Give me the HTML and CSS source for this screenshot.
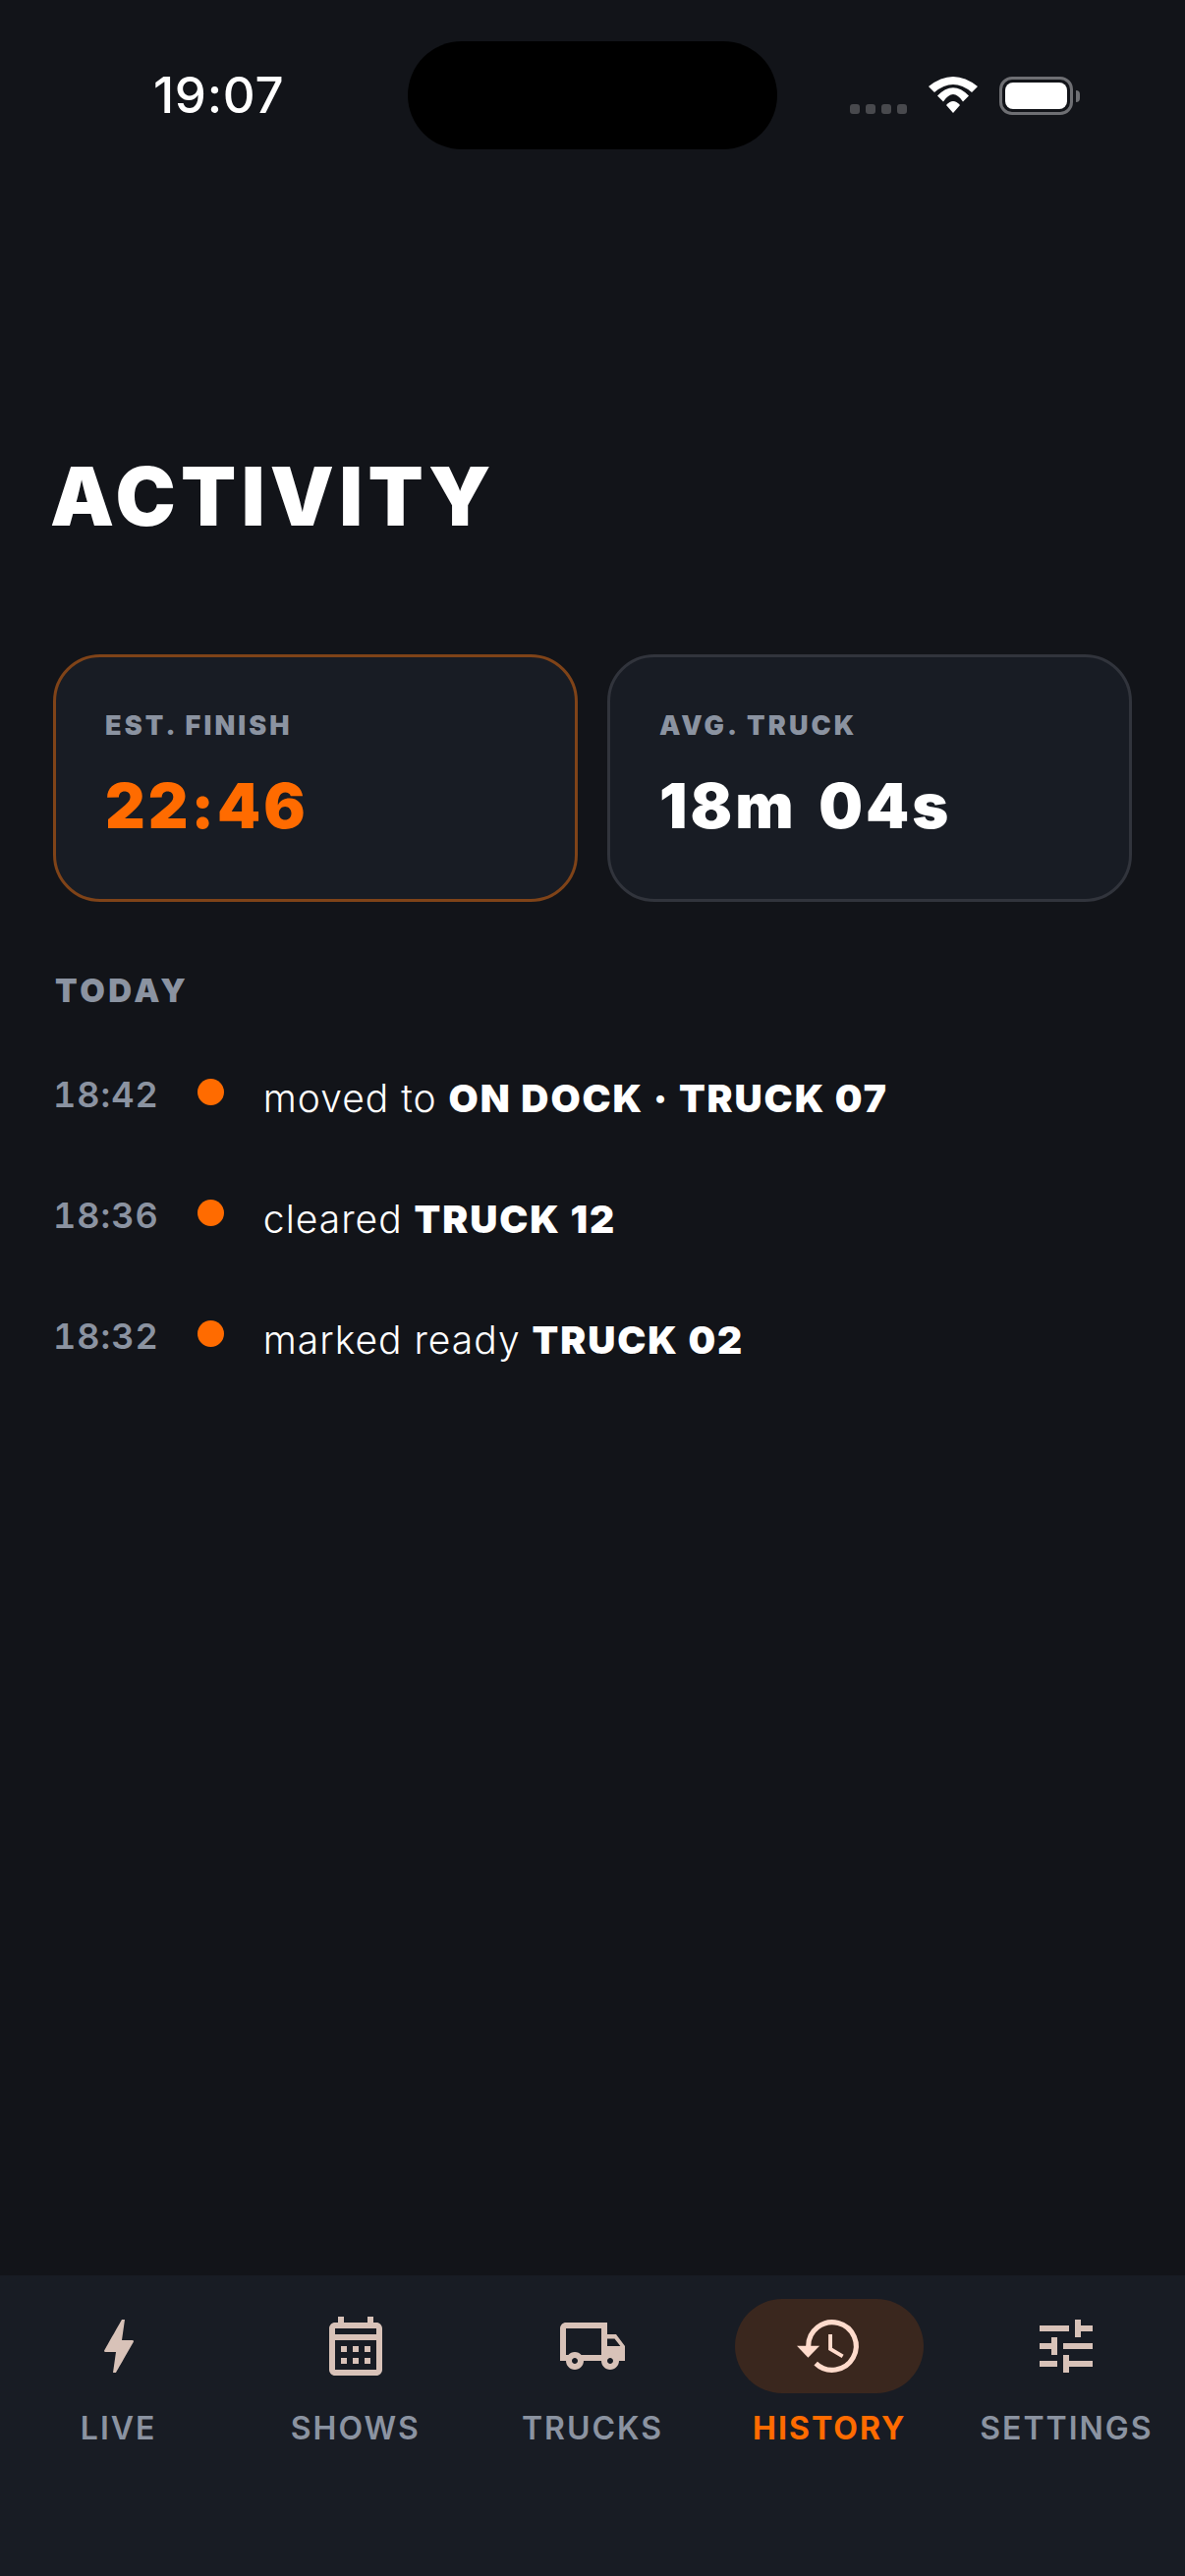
FILE: index.html
```html
<!DOCTYPE html>
<html lang="en">
<head>
<meta charset="utf-8">
<title>Activity</title>
<link rel="stylesheet" href="styles.css">
</head>
<body>
<div class="screen">
  <header class="status">
    <div class="clock">19:07</div>
    <div class="island"></div>
    <div class="status-icons">
      <div class="signal"><i></i><i></i><i></i><i></i></div>
      <svg class="wifi" viewBox="0 0 50 37" width="50" height="37"><path d="M0 10Q25-10 50 10L44 16Q25 0 6 16Z"/><path d="M9 19.5Q25 3 41 19.5L35 25.5Q25 10.5 15 25.5Z"/><path d="M18 29Q25 21 32 29L25 37Z"/></svg>
      <div class="battery"><div class="battery-fill"></div></div>
      <div class="battery-nub"></div>
    </div>
  </header>
  <main class="content">
    <h1 class="title">ACTIVITY</h1>
    <section class="cards">
      <div class="card card-accent">
        <div class="card-label">EST. FINISH</div>
        <div class="card-value value-accent">22:46</div>
      </div>
      <div class="card">
        <div class="card-label">AVG. TRUCK</div>
        <div class="card-value">18m 04s</div>
      </div>
    </section>
    <h2 class="section-label">TODAY</h2>
    <ul class="feed">
      <li class="row"><span class="time">18:42</span><span class="dot"></span><span class="text">moved to <b>ON DOCK · TRUCK 07</b></span></li>
      <li class="row"><span class="time">18:36</span><span class="dot"></span><span class="text">cleared <b>TRUCK 12</b></span></li>
      <li class="row"><span class="time">18:32</span><span class="dot"></span><span class="text">marked ready <b>TRUCK 02</b></span></li>
    </ul>
  </main>
  <nav class="tabs">
    <div class="tab">
      <div class="tab-icon"><svg viewBox="0 0 24 24"><path d="M11 21h-1l1-7H7.5c-.58 0-.57-.32-.38-.66.19-.34.05-.08.07-.12C8.48 10.94 10.42 7.54 13 3h1l-1 7h3.5c.49 0 .56.33.47.51l-.07.15C12.96 17.55 11 21 11 21z"/></svg></div>
      <span class="tab-label">LIVE</span>
    </div>
    <div class="tab">
      <div class="tab-icon"><svg viewBox="0 0 24 24"><path d="M19 4h-1V2h-2v2H8V2H6v2H5c-1.11 0-1.99.9-1.99 2L3 20c0 1.1.89 2 2 2h14c1.1 0 2-.9 2-2V6c0-1.100-.9-2-2-2zm0 16H5V10h14v10zm0-12H5V6h14v2zM9 14H7v-2h2v2zm4 0h-2v-2h2v2zm4 0h-2v-2h2v2zm-8 4H7v-2h2v2zm4 0h-2v-2h2v2zm4 0h-2v-2h2v2z"/></svg></div>
      <span class="tab-label">SHOWS</span>
    </div>
    <div class="tab">
      <div class="tab-icon"><svg viewBox="0 0 24 24"><path d="M20 8h-3V4H3c-1.100 0-2 .9-2 2v11h2c0 1.660 1.340 3 3 3s3-1.340 3-3h6c0 1.660 1.340 3 3 3s3-1.340 3-3h2v-5l-3-4zm-.5 1.500 1.960 2.500H17V9.500h2.500zM6 18c-.55 0-1-.45-1-1s.45-1 1-1 1 .45 1 1-.45 1-1 1zm2.220-3c-.55-.61-1.330-1-2.220-1s-1.670.39-2.220 1H3V6h12v9H8.220zM18 18c-.55 0-1-.45-1-1s.45-1 1-1 1 .45 1 1-.45 1-1 1z"/></svg></div>
      <span class="tab-label">TRUCKS</span>
    </div>
    <div class="tab tab-active">
      <div class="tab-icon"><svg viewBox="0 0 24 24"><path class="ring" d="M4.900 12a8.100 8.100 0 1 1 2.500 5.850"/><path d="M1 11.900h7.700L4.800 15.900Z"/><path class="hands" d="M12.350 8v5l4.200 2.450"/></svg></div>
      <span class="tab-label">HISTORY</span>
    </div>
    <div class="tab">
      <div class="tab-icon"><svg viewBox="0 0 24 24"><path d="M3 17v2h6v-2H3zM3 5v2h10V5H3zm10 16v-2h8v-2h-8v-2h-2v6h2zM7 9v2H3v2h4v2h2V9H7zm14 4v-2H11v2h10zm-6-4h2V7h4V5h-4V3h-2v6z"/></svg></div>
      <span class="tab-label">SETTINGS</span>
    </div>
  </nav>
</div>
</body>
</html>
```
FILE: styles.css
```css
* { box-sizing: border-box; }
html, body { margin: 0; padding: 0; background: #121419; }
body { font-family: Inter, "Liberation Sans", sans-serif; color: #fff; }
.screen { width: 1206px; height: 2622px; display: flex; flex-direction: column; overflow: hidden; }

.status { display: grid; grid-template-columns: 415px 376px 1fr; height: 152px; padding-top: 42px; flex: none; }
.clock { font-size: 51px; font-weight: 500; line-height: 110px; padding-left: 156px; letter-spacing: 0.7px; }
.island { background: #000; border-radius: 55px; height: 110px; }
.status-icons { display: flex; align-items: flex-start; padding: 36px 0 0 74px; }
.signal { display: flex; gap: 6px; margin-top: 28px; }
.signal i { width: 10px; height: 10px; border-radius: 3px; background: #48494d; display: block; }
.wifi { fill: #fff; margin-left: 22px; display: block; }
.battery { width: 75px; height: 39px; border: 3px solid #6e6f73; border-radius: 13px; padding: 3px; margin-left: 22px; }
.battery-fill { height: 100%; background: #fff; border-radius: 8px; }
.battery-nub { width: 4px; height: 12px; margin: 14px 0 0 3px; background: #6e6f73; border-radius: 0 4px 4px 0; }

.content { flex: 1; padding: 0 54px; }
.title { margin: 305px 0 0 -3px; font-size: 82px; font-weight: 900; letter-spacing: 5.3px; line-height: 98px; }
.cards { display: grid; grid-template-columns: 1fr 1fr; gap: 30px; padding-top: 111px; }
.card { height: 252px; border: 3px solid #31343c; border-radius: 48px; background: #181c24; padding: 53px 0 0 50px; }
.card-accent { border-color: #7f4318; }
.card-label { font-size: 27px; font-weight: 900; letter-spacing: 3.1px; line-height: 33px; color: #8b93a1; }
.card-value { font-size: 63px; font-weight: 900; letter-spacing: 3px; word-spacing: 7px; line-height: 76px; margin-top: 27px; }
.value-accent { color: #ff6b00; }
.section-label { margin: 72px 0 0 2px; font-size: 33px; font-weight: 900; letter-spacing: 3.6px; line-height: 36px; color: #8b93a1; }
.feed { list-style: none; margin: 62px 0 0; padding: 0; display: flex; flex-direction: column; }
.row { display: flex; align-items: flex-start; height: 123px; }
.time { font-size: 36px; font-weight: 600; letter-spacing: 1px; line-height: 44px; color: #8b93a1; margin-top: 4px; font-variant-numeric: tabular-nums; }
.dot { width: 27px; height: 27px; border-radius: 50%; background: #ff6b00; margin: 10px 0 0 39px; flex: none; }
.text { margin: 6px 0 0 40px; font-size: 39px; line-height: 48px; font-weight: 300; letter-spacing: 1px; }
.text b { font-weight: 900; letter-spacing: 1.9px; }

.tabs { flex: none; height: 306px; background: #181c24; display: grid; grid-template-columns: repeat(5, 1fr); padding-top: 24px; }
.tab { display: flex; flex-direction: column; align-items: center; }
.tab-icon { width: 192px; height: 96px; border-radius: 48px; display: flex; align-items: center; justify-content: center; }
.tab-icon svg { width: 72px; height: 72px; fill: #d8c2b8; display: block; }
.tab-label { margin-top: 16px; font-size: 32px; line-height: 40px; font-weight: 600; letter-spacing: 2px; color: #8b93a1; white-space: nowrap; }
.tab-active .tab-icon { background: #3a271e; }
.tab-active .tab-icon svg { fill: #ffdbcc; }
.tab-active .ring { fill: none; stroke: #ffdbcc; stroke-width: 1.7; }
.tab-active .hands { fill: none; stroke: #ffdbcc; stroke-width: 1.3; }
.tab-active .tab-label { color: #ff6b00; font-weight: 700; }
```
